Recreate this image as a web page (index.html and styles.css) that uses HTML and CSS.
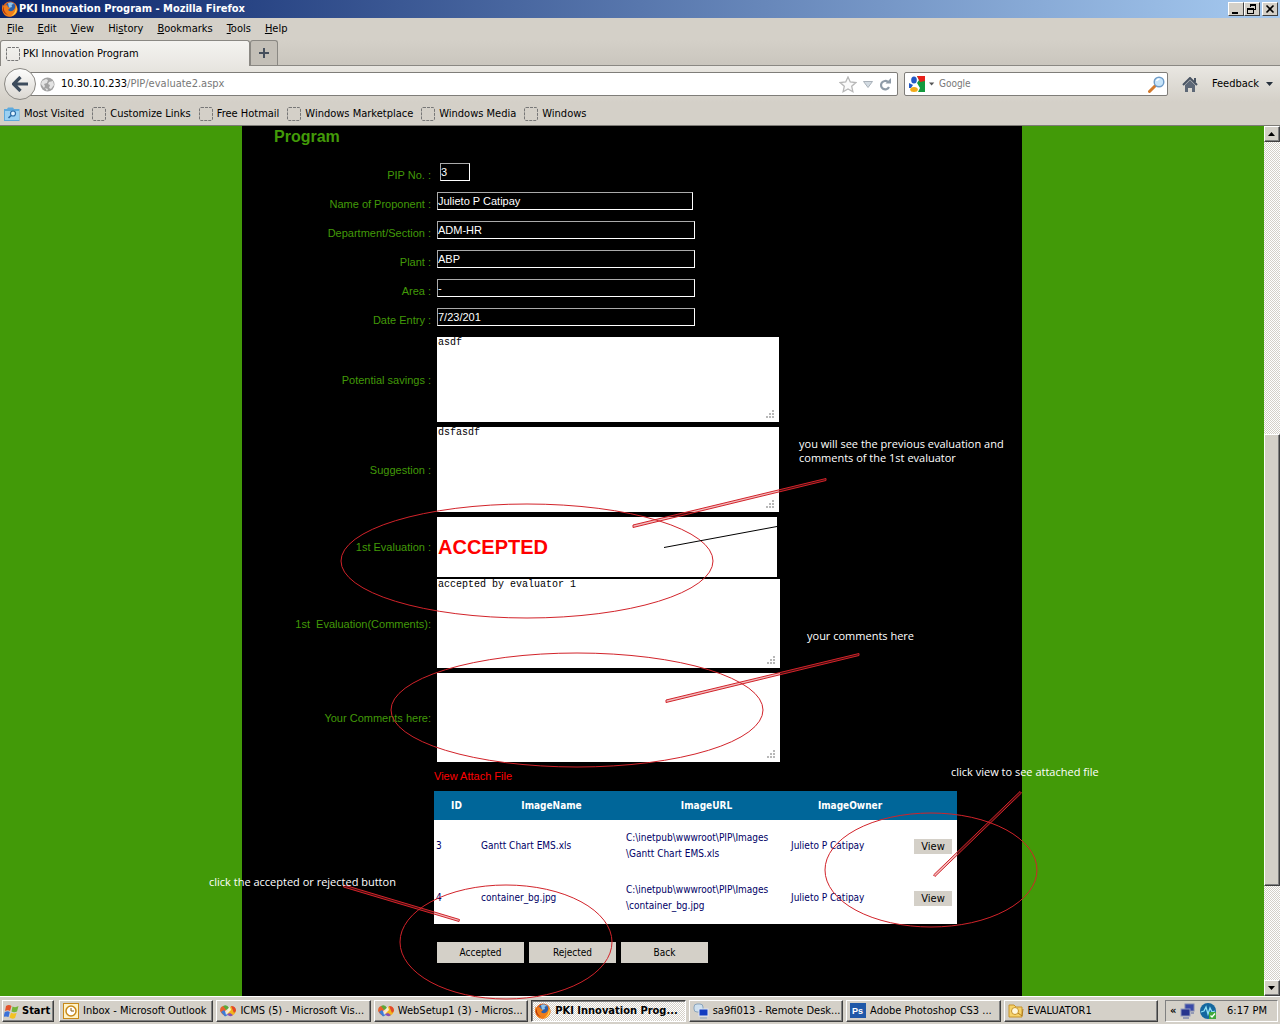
FILE: index.html
```html
<!DOCTYPE html>
<html lang="en">
<head>
<meta charset="utf-8">
<title>PKI Innovation Program - Mozilla Firefox</title>
<link rel="stylesheet" href="styles.css">
</head>
<body>
<svg class="defs" width="0" height="0" aria-hidden="true">
  <symbol id="firefox" viewBox="0 0 16 16">
    <circle cx="8" cy="8" r="7.5" fill="#e2641a"/>
    <circle cx="8.5" cy="6.5" r="5.2" fill="#2d5fa8"/>
    <path d="M6 2c2-1 5-.5 6 1-2 0-3 1-2 3l-3 1z" fill="#8fc3ea"/>
    <path d="M1 3c0 1 0 1.500 1 2l3-1 1 2 2 1-2 2c2 2 5 2 7-2 .5-2 0-3-.5-4C15 5 16 8 15 11c-2 4-7 6-11 4C0 12-1 7 1 3z" fill="#ef7d1a"/>
    <path d="M14 5c2 4 0 9-5 10 3-2 5-5 5-10z" fill="#ffd34a"/>
    <path d="M2 5c-1 4 1 7 4 9-4-1-7-5-4-9z" fill="#b5330c"/>
  </symbol>
  <symbol id="blank" viewBox="0 0 14 14">
    <rect x=".5" y=".5" width="13" height="13" rx="1.500" fill="none" stroke="#777" stroke-dasharray="3 1"/>
  </symbol>
  <symbol id="vs" viewBox="0 0 16 12">
    <path d="M0 6q0-5 4-5l5 5-4 5q-3-1-5-5z" fill="#e8622c"/><path d="M3 1q4-2 6 2L7 6z" fill="#5aa839"/>
    <path d="M1 7l3-2 4 5-3 1.500z" fill="#3c7bd6"/><path d="M6 8l5-7q5 1 5 5-1 4-5 5z" fill="#f2b51d"/>
    <path d="M11 1q5 0 5 5l-2 2z" fill="#e2482b"/><path d="M7 9l3-1 3 2q-3 3-6-1z" fill="#8d4fb0"/><path d="M5 6l5-4 1 3-5 5z" fill="#fff" opacity=".75"/>
  </symbol>
  <symbol id="corner-down" viewBox="0 0 8 4"><path d="M0 0h7L3.500 4z" fill="currentColor"/></symbol>
</svg>

<header class="chrome">
  <div class="titlebar">
    <svg class="i16"><use href="#firefox"/></svg>
    <h1 class="title">PKI Innovation Program - Mozilla Firefox</h1>
    <div class="winbtns">
      <button class="winbtn" aria-label="Minimize"><svg width="10" height="10"><path d="M1 8h6v2H1z"/></svg></button>
      <button class="winbtn" aria-label="Restore"><svg width="10" height="10"><path d="M3 0h6v6H7V5h1V2H4v1H3zM0 4h7v6H0zM1 6v3h5V6z" fill-rule="evenodd"/></svg></button>
      <button class="winbtn close" aria-label="Close"><svg width="10" height="10"><path d="M1.500 1.500l7 7M8.500 1.500l-7 7" stroke="#000" stroke-width="1.600"/></svg></button>
    </div>
  </div>
  <nav class="menubar" aria-label="Menu">
    <button><u>F</u>ile</button><button><u>E</u>dit</button><button><u>V</u>iew</button><button>Hi<u>s</u>tory</button><button><u>B</u>ookmarks</button><button><u>T</u>ools</button><button><u>H</u>elp</button>
  </nav>
  <div class="tabs">
    <button class="tab"><svg class="i14"><use href="#blank"/></svg>PKI Innovation Program</button>
    <button class="newtab" aria-label="New tab"><svg width="10" height="10"><path d="M4 0h2v4h4v2H6v4H4V6H0V4h4z" fill="#454f5c"/></svg></button>
  </div>
  <div class="navbar">
    <button class="back" aria-label="Go back"><svg width="16" height="16" viewBox="0 0 16 16"><path d="M8.500 1L1.500 8l7 7M2 8h14" fill="none" stroke="#3d4c5d" stroke-width="3.200"/></svg></button>
    <div class="urlbar">
      <svg width="15" height="15" viewBox="0 0 15 15"><circle cx="7.500" cy="7.500" r="7" fill="#a2a2a2"/><path d="M2 4l4-2 2 1-1 3-3 1 1 2-1 2-3-4zM9 5l4-1 1 4-3 4-2-1 1-3-2-1zM5 11l3 1-1 2z" fill="#e4e4e4"/></svg>
      <div class="url" role="textbox" aria-label="Address">10.30.10.233<span>/PIP/evaluate2.aspx</span></div>
      <svg width="18" height="17" viewBox="0 0 18 17"><path d="M9 1l2.300 5 5.500.6-4.100 3.700 1.200 5.400L9 13l-4.900 2.700 1.200-5.400L1.200 6.600l5.500-.6z" fill="#fafafa" stroke="#b7b7b7" stroke-width="1.300"/></svg>
      <svg width="10" height="7" viewBox="0 0 10 7"><path d="M.5.5h9L5 6.500z" fill="#d3dbe2" stroke="#a9b1b9"/></svg>
      <svg width="13" height="13" viewBox="0 0 13 13"><path d="M9 4A4.200 4.200 0 1 0 10 9" fill="none" stroke="#8f9ba7" stroke-width="2.200"/><path d="M6.500 5.500H12V0z" fill="#8f9ba7"/></svg>
    </div>
    <div class="search">
      <svg width="16" height="16" viewBox="0 0 16 16"><path d="M8 0h8v16H9l2-4-3-5 2-3z" fill="#159a3f"/><path d="M8 0h8v5l-5 1z" fill="#e8211b"/><ellipse cx="5" cy="4" rx="2.800" ry="3.500" fill="#2358c4"/><path d="M0 7l4 2-2 3H0z" fill="#2358c4"/><ellipse cx="5" cy="13.500" rx="3.800" ry="2.500" fill="#f3ab17"/></svg>
      <svg class="drop"><use href="#corner-down"/></svg>
      <input type="text" placeholder="Google" aria-label="Search">
      <svg width="17" height="17" viewBox="0 0 17 17"><path d="M1.500 15.500L7 10" stroke="#d47a2c" stroke-width="3" stroke-linecap="round"/><circle cx="11" cy="6" r="4.800" fill="#c6e4fa" stroke="#6f9cc8" stroke-width="1.400"/><path d="M8.500 5q1-2 3-2" fill="none" stroke="#fff" stroke-width="1.500"/></svg>
    </div>
    <button class="home" aria-label="Home"><svg width="16" height="15" viewBox="0 0 16 15"><path d="M1 8l7-7 7 7" fill="none" stroke="#485362" stroke-width="2"/><path d="M3 8l5-5 5 5v7h-3v-4H6v4H3z" fill="#5d6877"/><path d="M12 1h2v4h-2z" fill="#485362"/></svg></button>
    <button class="feedback">Feedback <svg class="drop dark"><use href="#corner-down"/></svg></button>
  </div>
  <nav class="bookmarks" aria-label="Bookmarks">
    <a href="#"><svg width="16" height="14" viewBox="0 0 16 14"><path d="M0 2h3l1-1.500h5L10 2h5.500v12H0z" fill="#5ea9dc"/><path d="M1 4h14v9H1z" fill="#9bd0f2"/><circle cx="9" cy="6.500" r="2.500" fill="#e2f3ff" stroke="#2b6ca6" stroke-width="1.200"/><path d="M7 8.500L4.500 11" stroke="#2b6ca6" stroke-width="1.600"/></svg>Most Visited</a>
    <a href="#"><svg class="i14"><use href="#blank"/></svg>Customize Links</a>
    <a href="#"><svg class="i14"><use href="#blank"/></svg>Free Hotmail</a>
    <a href="#"><svg class="i14"><use href="#blank"/></svg>Windows Marketplace</a>
    <a href="#"><svg class="i14"><use href="#blank"/></svg>Windows Media</a>
    <a href="#"><svg class="i14"><use href="#blank"/></svg>Windows</a>
  </nav>
</header>

<div class="viewport">
  <div class="page">
    <main class="panel">
      <h2>Program</h2>
      <form class="form">
        <div class="row"><label for="pip">PIP No. :</label><input id="pip" class="short" value="3"></div>
        <div class="row"><label for="name">Name of Proponent :</label><input id="name" class="name" value="Julieto P Catipay"></div>
        <div class="row"><label for="dept">Department/Section :</label><input id="dept" value="ADM-HR"></div>
        <div class="row"><label for="plant">Plant :</label><input id="plant" value="ABP"></div>
        <div class="row"><label for="area">Area :</label><input id="area" value="-"></div>
        <div class="row"><label for="date">Date Entry :</label><input id="date" value="7/23/201"></div>
        <div class="row area"><label for="sav">Potential savings :</label><textarea id="sav">asdf</textarea></div>
        <div class="row area"><label for="sug">Suggestion :</label><textarea id="sug">dsfasdf</textarea></div>
        <div class="row area eval"><label for="ev">1st Evaluation :</label><input id="ev" class="verdict" value="ACCEPTED"></div>
        <div class="row area"><label for="evc">1st&nbsp; Evaluation(Comments):</label><textarea id="evc" class="tall">accepted by evaluator 1</textarea></div>
        <div class="row area"><label for="yc">Your Comments here:</label><textarea id="yc" class="tall"></textarea></div>
        <div class="attach">
          <h3>View Attach File</h3>
          <table>
            <colgroup><col class="c-id"><col class="c-name"><col class="c-url"><col class="c-owner"><col></colgroup>
            <thead><tr><th>ID</th><th>ImageName</th><th>ImageURL</th><th>ImageOwner</th><th></th></tr></thead>
            <tbody>
              <tr><td>3</td><td>Gantt Chart EMS.xls</td><td>C:\inetpub\wwwroot\PIP\Images<br>\Gantt Chart EMS.xls</td><td>Julieto P Catipay</td><td><button type="button" class="view">View</button></td></tr>
              <tr><td>4</td><td>container_bg.jpg</td><td>C:\inetpub\wwwroot\PIP\Images<br>\container_bg.jpg</td><td>Julieto P Catipay</td><td><button type="button" class="view">View</button></td></tr>
            </tbody>
          </table>
          <div class="actions"><button type="button">Accepted</button><button type="button">Rejected</button><button type="button">Back</button></div>
        </div>
      </form>
      <svg class="notes" viewBox="242 126 780 870">
        <g fill="none" stroke="#d2232a">
          <ellipse cx="527" cy="561" rx="186" ry="57"/>
          <ellipse cx="577" cy="710" rx="186" ry="57"/>
          <ellipse cx="931" cy="870" rx="106" ry="57"/>
          <ellipse cx="506" cy="942" rx="106" ry="57"/>
        </g>
        <g fill="#d2232a" fill-opacity=".3" stroke="#d2232a">
          <path d="M633 525L826 478.500V480.500L633 527.500z"/>
          <path d="M666 700L859 653.500V655.500L666 702.500z"/>
          <path d="M933.500 875L1020 791.500L1021.500 793L935 876.500z"/>
          <path d="M344 885L459.500 919.500L459 921.500L343.500 887z"/>
        </g>
        <path d="M664 547.500L777 526.500" stroke="#000" fill="none"/>
        <text x="799" y="448">you will see the previous evaluation and</text>
        <text x="799" y="462">comments of the 1st evaluator</text>
        <text x="807" y="640">your comments here</text>
        <text x="951" y="776">click view to see attached file</text>
        <text x="209" y="886">click the accepted or rejected button</text>
      </svg>
    </main>
  </div>
  <div class="scroll">
    <button class="sbtn" aria-label="Scroll up"><svg width="8" height="4"><path d="M0 4h7L3.500 0z"/></svg></button>
    <div class="gap-top"></div><div class="thumb"></div><div class="gap-bottom"></div>
    <button class="sbtn" aria-label="Scroll down"><svg width="8" height="4"><path d="M0 0h7L3.500 4z"/></svg></button>
  </div>
</div>

<footer class="taskbar">
  <button class="start"><svg width="16" height="16" viewBox="0 0 16 16"><path d="M2 3q3-2 5.500 0L6 8Q4 6.500 1 8z" fill="#e3532a"/><path d="M8.500 3.500q3 1.500 6-.5L13 8.500q-3 1.500-5.500 0z" fill="#73b43a"/><path d="M.8 9q3-1.500 5 0l-1.300 5Q2 13-.5 14z" fill="#3c72d8"/><path d="M7 9.800q3 1.500 5.700 0L11 15q-3 1.500-5.500-.5z" fill="#f3c224"/></svg>Start</button>
  <button class="task"><svg class="i16" viewBox="0 0 16 16"><rect x=".5" y=".5" width="15" height="15" fill="#fff3c8" stroke="#c98918"/><circle cx="8" cy="8" r="5" fill="#fff" stroke="#c98918" stroke-width="1.500"/><path d="M8 5v3h3" fill="none" stroke="#8a5a10"/></svg><span>Inbox - Microsoft Outlook</span></button>
  <button class="task"><svg class="i16"><use href="#vs"/></svg><span>ICMS (5) - Microsoft Vis...</span></button>
  <button class="task"><svg class="i16"><use href="#vs"/></svg><span>WebSetup1 (3) - Micros...</span></button>
  <button class="task active"><svg class="i16"><use href="#firefox"/></svg><span>PKI Innovation Prog...</span></button>
  <button class="task"><svg class="i16" viewBox="0 0 16 16"><rect x="1" y="1" width="9" height="8" rx="3" fill="#cfe0ee" stroke="#8aa4bc"/><rect x="6" y="6" width="9" height="7" fill="#123cc0" stroke="#dde6f2"/><path d="M7 15h7" stroke="#8aa4bc"/></svg><span>sa9fi013 - Remote Desk...</span></button>
  <button class="task"><svg class="i16" viewBox="0 0 16 16"><rect width="16" height="15" fill="#2058a8"/><text x="2" y="11" class="ps">Ps</text></svg><span>Adobe Photoshop CS3 ...</span></button>
  <button class="task"><svg class="i16" viewBox="0 0 16 16"><path d="M1 2h5l2 2h6v10H1z" fill="#f6d36a" stroke="#c7932a"/><circle cx="7" cy="8" r="3.500" fill="#fff9e0" stroke="#c7932a"/><path d="M10 10l4 3 1-7" fill="none" stroke="#b07c1c"/></svg><span>EVALUATOR1</span></button>
  <div class="tray">
    <b>«</b>
    <svg class="i16" viewBox="0 0 16 16"><rect x="5" y="1" width="9" height="7" fill="#3a4aa8" stroke="#7f88ae"/><rect x="1" y="6" width="9" height="7" fill="#26348e" stroke="#8f98be"/><path d="M3 15h6M11 10h3" stroke="#7f88ae" stroke-width="1.500"/></svg>
    <svg class="i16" viewBox="0 0 16 16"><circle cx="8" cy="8" r="8" fill="#14679f"/><path d="M1 9l3-1 2-4 2 7 2-6 2 4 3-1" fill="none" stroke="#8fe0f5" stroke-width="1.300"/><path d="M9 9h7v7H9z" fill="#3fa93c"/><path d="M10.500 12.500l1.500 1.500 3-3.500" fill="none" stroke="#fff" stroke-width="1.300"/></svg>
    <time>6:17 PM</time>
  </div>
</footer>
</body>
</html>
```
FILE: styles.css
```css
* { box-sizing: border-box; }
:root {
  --face: #d4d0c8;
  --green: #429a08;
  --ui: "DejaVu Sans Condensed", "DejaVu Sans", sans-serif;
  --arial: "Liberation Sans", Arial, sans-serif;
}
body {
  margin: 0;
  min-height: 100vh;
  display: flex;
  flex-direction: column;
  font: 11px/14px var(--ui);
  color: #000;
  background: var(--face);
}
button, input, textarea { font: inherit; color: inherit; margin: 0; border-radius: 0; }
button { background: none; border: 0; padding: 0; }
svg { flex: none; display: block; }
.defs { position: absolute; }
.i16 { width: 16px; height: 16px; }
.i14 { width: 14px; height: 14px; }

/* window frame */
.titlebar {
  display: flex; align-items: center; gap: 1px; height: 18px; padding: 0 2px;
  background: linear-gradient(90deg, #0a246a, #a6caf0);
}
.title { flex: 1; margin: 0; font-size: 11px; line-height: 16px; color: #fff; }
.winbtns { display: flex; }
.winbtn {
  width: 16px; height: 14px; display: grid; place-items: center;
  background: var(--face); border: 1px solid; border-color: #fff #404040 #404040 #fff;
}
.close { margin-left: 2px; }
.menubar { display: flex; gap: 14px; height: 22px; padding-left: 7px; }
.tabs { display: flex; height: 26px; border-bottom: 1px solid #8a8883; background: linear-gradient(#d4d0c8, #cac6be); }
.tab {
  display: flex; align-items: center; gap: 3px; width: 250px; height: 26px; padding: 0 5px;
  background: linear-gradient(#f4f3f0, #e9e7e2);
  border: 1px solid #8a8883; border-bottom: 0; border-radius: 3px 3px 0 0;
}
.newtab {
  width: 28px; height: 25px; display: grid; place-items: center;
  border: 1px solid #8a8883; border-bottom: 0; border-radius: 3px 3px 0 0; background: #c3bfb7;
}
.navbar {
  display: flex; align-items: center; height: 36px; padding: 0 6px 0 4px;
  background: linear-gradient(#e9e7e2, #d4d0c8);
}
.back {
  position: relative; z-index: 1; width: 32px; height: 32px; display: grid; place-items: center;
  border: 1px solid #8a8883; border-radius: 50%; background: linear-gradient(#fdfdfc, #dad7d1);
}
.urlbar, .search { display: flex; align-items: center; height: 24px; background: #fff; border: 1px solid #7f7d79; border-radius: 2px; }
.urlbar { flex: 1; gap: 6px; margin-left: -9px; padding: 0 5px 0 12px; }
.url { flex: 1; }
.url span { color: #777; }
.search { width: 264px; margin-left: 6px; padding: 0 2px 0 4px; gap: 4px; }
.search input { flex: 1; min-width: 0; border: 0; padding: 0; outline: 0; font-size: 10px; }
.search input::placeholder { color: #777; opacity: 1; }
.drop { width: 6px; height: 4px; color: #555; }
.dark { width: 8px; color: #26303c; }
.home { margin: 0 14px; }
.feedback { display: flex; align-items: center; gap: 7px; }
.bookmarks { display: flex; gap: 8px; height: 24px; padding-left: 4px; border-bottom: 1px solid #7d7b76; }
.bookmarks a { display: flex; align-items: center; gap: 4px; color: #000; text-decoration: none; }

/* web page */
.viewport { flex: 1; display: flex; }
.page { flex: 1; background: var(--green); }
.panel { position: relative; width: 780px; min-height: 100%; margin: 0 auto; background: #000; }
h2 { margin: 0; padding: 1px 0 16px 32px; font: bold 16px/20px var(--arial); color: var(--green); }
.form { font: 11px/14px var(--arial); }
.row { display: grid; grid-template-columns: 189px 1fr; column-gap: 6px; align-items: start; height: 29px; }
.row label { justify-self: end; margin-top: 5px; color: var(--green); white-space: nowrap; }
.row input { width: 258px; height: 18px; padding: 0; background: #000; color: #fff; border: 1px solid #fff; border-top-color: #aaa; border-left-color: #aaa; }
.row .short { width: 30px; margin-left: 3px; }
.row .name { width: 256px; }
.row.area { height: auto; align-items: center; margin-bottom: 5px; }
.area label { margin-top: 0; }
.row textarea {
  width: 342px; height: 85px; padding: 0 1px; border: 0; resize: none; display: block;
  font: 10px/12px "Liberation Mono", monospace; color: #000;
  --d: linear-gradient(#b8b8b8, #b8b8b8) no-repeat;
  background:
    var(--d) right 5px bottom 4px / 2px 2px, var(--d) right 8px bottom 4px / 2px 2px, var(--d) right 11px bottom 4px / 2px 2px,
    var(--d) right 5px bottom 7px / 2px 2px, var(--d) right 8px bottom 7px / 2px 2px, var(--d) right 5px bottom 10px / 2px 2px, #fff;
}
.row .tall { width: 343px; height: 89px; }
.row .verdict { width: 340px; height: 60px; padding: 0 1px; border: 0; background: #fff; color: #f00; font-weight: bold; font-size: 20px; }
.row.eval { margin-bottom: 2px; }
.attach { margin-left: 192px; }
h3 { margin: 0; padding: 2px 0 8px; font: 11px/14px var(--arial); color: #f00; }
table { width: 523px; table-layout: fixed; border-collapse: collapse; font: 10px/16px var(--ui); color: #000066; background: #fff; }
.c-id { width: 45px; } .c-name { width: 145px; } .c-url { width: 165px; } .c-owner { width: 122px; }
th { height: 29px; padding: 0; background: #006699; color: #fff; }
td { height: 52px; padding: 0 2px; white-space: nowrap; }
.view { width: 38px; height: 15px; background: var(--face); color: #000; font-size: 11px; line-height: 15px; display: block; margin-left: 1px; }
.actions { display: flex; gap: 5px; padding: 18px 0 32px 3px; font: 10px/14px var(--ui); }
.actions button { width: 87px; height: 21px; background: var(--face); color: #000; }
.notes { position: absolute; top: 0; left: 0; width: 780px; height: 870px; overflow: visible; pointer-events: none; z-index: 2; }
.notes text { font: 11px "Open Sans", sans-serif; fill: #fff; }

/* scrollbar */
.scroll, .active { background: repeating-conic-gradient(#fff 0 25%, #d4d0c8 0 50%) 0 0 / 2px 2px; }
.scroll { width: 16px; display: flex; flex-direction: column; }
.sbtn, .thumb, .start, .task { background-color: var(--face); border: 1px solid; border-color: #fff #404040 #404040 #fff; box-shadow: inset -1px -1px #808080; }
.sbtn { height: 16px; display: grid; place-items: center; }
.gap-top { flex: 293; } .thumb { flex: 451; } .gap-bottom { flex: 94; }

/* taskbar */
.taskbar { display: flex; gap: 3px; height: 28px; padding: 3px 2px 2px; border-top: 1px solid #fff; background: var(--face); }
.start { display: flex; align-items: center; gap: 2px; width: 52px; margin-right: 2px; padding-left: 1px; font-weight: bold; }
.task { flex: 1; min-width: 0; display: flex; align-items: center; gap: 4px; padding: 0 2px 0 3px; text-align: left; white-space: nowrap; }
.task.active { border-color: #404040 #fff #fff #404040; box-shadow: inset 1px 1px #808080; font-weight: bold; }
.ps { font: bold 9px var(--arial); fill: #fff; }
.tray { display: flex; align-items: center; gap: 4px; width: 113px; margin-left: 4px; padding: 0 4px; border: 1px solid; border-color: #808080 #fff #fff #808080; white-space: nowrap; }
.tray time { margin-left: auto; margin-right: 6px; }
```
